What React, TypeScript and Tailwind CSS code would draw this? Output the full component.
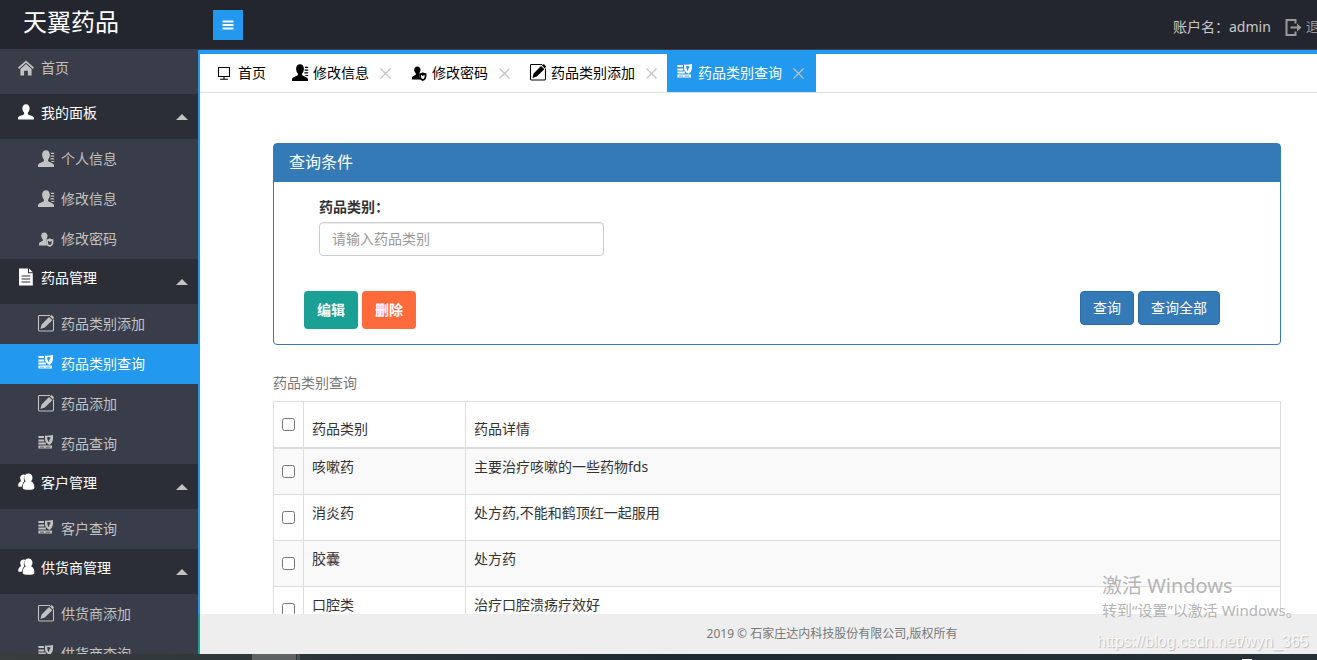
import clsx from "clsx";
import { useState } from "react";
import type { ReactNode } from "react";

type IconName = "home" | "user" | "profile" | "password" | "file" | "edit" | "query" | "users" | "monitor";

const ICONS: Record<IconName, ReactNode> = {
  home: (
    <>
      <path d="M8 0.4 16 7.6 14.9 8.9 8 2.8 1.1 8.9 0 7.6Z" />
      <path d="M8 4.1 13.6 9.1V15.6H9.9V10.8H6.1V15.6H2.4V9.1Z" />
    </>
  ),
  user: (
    <path d="M8 0.2C10.3 0.2 11.6 1.9 11.6 4.2 11.6 6 10.9 7.6 9.9 8.6V10.2C10.4 11 15.6 12 16 13.3V15.6H0V13.3C0.4 12 5.6 11 6.1 10.2V8.6C5.1 7.6 4.4 6 4.4 4.2 4.4 1.9 5.7 0.2 8 0.2Z" />
  ),
  profile: (
    <>
      <path d="M8 -0.8C10.4 -0.8 11.9 1 11.9 3.8 11.9 5.8 11.1 7.6 10.1 8.6V10C10.7 11 16 12 16 14.2V16H0V14.2C0 12 5.3 11 5.9 10V8.6C4.9 7.6 4.1 5.8 4.1 3.8 4.1 1 5.6 -0.8 8 -0.8Z" />
      <path d="M13 1.8H16.2V2.9H13ZM12.6 4.6H16.2V5.7H12.6ZM12.4 7.3H16.2V8.4H12.4ZM13.4 10H16.2V11H13.4Z" />
    </>
  ),
  password: (
    <>
      <path d="M6.3 1.4C8.3 1.4 9.5 2.9 9.5 4.8 9.5 6.3 9 7.4 8.2 8.2 7.7 10 8.1 12.6 10 14.6H1V12.4C1.4 11 4.6 10.3 4.9 9.6V8.4C3.8 7.7 3.2 6.3 3.2 4.8 3.2 2.9 4.3 1.4 6.3 1.4Z" />
      <path
        fillRule="evenodd"
        d="M8.2 8.2C9.8 8.2 10.8 7.9 11.8 7.2 12.8 7.9 13.9 8.2 15.4 8.2V11.2C15.4 13.6 14 15.2 11.8 16 9.6 15.2 8.2 13.6 8.2 11.2ZM10 9.8V11.4C10 12.8 10.8 13.6 11.8 14.1 12.8 13.6 13.6 12.8 13.6 11.4V9.8L11.8 11Z"
      />
    </>
  ),
  file: (
    <path
      fillRule="evenodd"
      d="M1 -0.5H10V4.2H14.8V16.5H1ZM11 -0.5 14.8 3.3H11ZM3.6 6.6V7.6H12.2V6.6ZM3.6 9.6V10.6H12.2V9.6ZM3.6 12.6V13.6H12.2V12.6Z"
    />
  ),
  edit: (
    <g transform="translate(0 -1)">
      <path fill="none" stroke="currentColor" strokeWidth="1.1" d="M12 0.5H1.4Q0.5 0.5 0.5 1.4V15.1Q0.5 16 1.4 16H14.6Q15.5 16 15.5 15.1V4.6" />
      <path d="M11 1.9 14.3 5.2 6.8 12.6 2.4 13.9 3.6 9.6ZM11.8 1.3 13 0.4Q13.6 0 14.3 0.6L15.6 1.9Q16.1 2.6 15.6 3.2L14.9 4.4Z" />
    </g>
  ),
  query: (
    <g transform="translate(-1 -2)">
      <path d="M1.4 2H7V4H1.4ZM1.4 5.4H7.2V7.4H1.4ZM1.4 8.6H8.8V10.4H1.4Z" />
      <path fillRule="evenodd" d="M1.4 11.6H15V14.6H1.4ZM3 12.7V13.6H7V12.7ZM8.6 12.7V13.6H13.4V12.7Z" />
      <path fillRule="evenodd" d="M8 1.6Q11 1.9 16 1V5.6Q15.6 9 12.4 11 8.2 8.6 8 5.4ZM10.2 3.2 10.4 5.6Q10.8 7.4 12 8.2 11.8 6 13.8 3.8 12 2.8 10.2 3.2Z" />
    </g>
  ),
  users: (
    <>
      <path d="M5.6 0.6Q6.9 0.5 7.4 1.3 4.9 3.7 6.3 7.2 4 8.8 3.8 12.8H0.4Q-0.6 9.3 2.6 7.6 3.2 6.9 2.6 5.8C1.4 3.4 3 0.8 5.6 0.6Z" />
      <path d="M10.4 -0.4C12.9 -0.4 14.5 1.3 14.5 3.7 14.5 5.3 13.9 6.4 13 7.2 15.6 8.2 16.6 11.2 16.3 14.4Q15.7 15.8 10.6 15.8 5.4 15.8 4.8 14.4C4.5 11.2 5.2 8.4 7.8 7.2 6.9 6.4 6.3 5.3 6.3 3.7 6.3 1.3 7.9 -0.4 10.4 -0.4Z" />
    </>
  ),
  monitor: <path fill="none" stroke="currentColor" strokeWidth="1.1" d="M0.5 2.5H11.5V11.5H0.5ZM6 11.5V14M2 14.2H10" />,
};

function Icon({ name }: { name: IconName }) {
  return (
    <svg viewBox="0 0 16 17" className="h-[17px] w-4 shrink-0 overflow-visible" fill="currentColor" aria-hidden="true">
      {ICONS[name]}
    </svg>
  );
}

const MENU: { title: string; icon: IconName; items: { title: string; icon: IconName }[] }[] = [
  {
    title: "我的面板",
    icon: "user",
    items: [
      { title: "个人信息", icon: "profile" },
      { title: "修改信息", icon: "profile" },
      { title: "修改密码", icon: "password" },
    ],
  },
  {
    title: "药品管理",
    icon: "file",
    items: [
      { title: "药品类别添加", icon: "edit" },
      { title: "药品类别查询", icon: "query" },
      { title: "药品添加", icon: "edit" },
      { title: "药品查询", icon: "query" },
    ],
  },
  { title: "客户管理", icon: "users", items: [{ title: "客户查询", icon: "query" }] },
  {
    title: "供货商管理",
    icon: "users",
    items: [
      { title: "供货商添加", icon: "edit" },
      { title: "供货商查询", icon: "query" },
    ],
  },
];

const TABS: { title: string; icon: IconName }[] = [
  { title: "修改信息", icon: "profile" },
  { title: "修改密码", icon: "password" },
  { title: "药品类别添加", icon: "edit" },
  { title: "药品类别查询", icon: "query" },
];

const ROWS = [
  { name: "咳嗽药", detail: "主要治疗咳嗽的一些药物fds" },
  { name: "消炎药", detail: "处方药,不能和鹤顶红一起服用" },
  { name: "胶囊", detail: "处方药" },
  { name: "口腔类", detail: "治疗口腔溃疡疗效好" },
];

function Header() {
  return (
    <header className="flex h-[50px] shrink-0 items-start overflow-hidden border-b border-[#393d49] bg-[#23262e]">
      <h1 className="w-[213px] shrink-0 pt-1 pl-[23px] text-2xl leading-9 text-white">天翼药品</h1>
      <button type="button" aria-label="菜单" className="mt-2.5 flex size-[30px] items-center justify-center bg-[#2299ee] text-white">
        <svg viewBox="0 0 12 10" className="h-2.5 w-3" fill="currentColor" aria-hidden="true">
          <path d="M0.5 0.5H11.5V2.5H0.5ZM0.5 4H11.5V6H0.5ZM0.5 7.5H11.5V9.5H0.5Z" />
        </svg>
      </button>
      <div className="ml-auto flex h-[54px] w-36 shrink-0 items-center overflow-hidden whitespace-nowrap text-[#c8c8c8]">
        <span>账户名：admin</span>
        <a href="#logout" className="ml-3.5 flex items-center gap-1 text-[#9a9a9a]">
          <svg viewBox="0 0 17 17" className="size-[17px] shrink-0" fill="none" stroke="currentColor" strokeWidth="2" aria-hidden="true">
            <path d="M10.5 4.5V1H1.5V16H10.5V12.5M5.5 8.5H13" />
            <path d="M12 4.5 16.5 8.5 12 12.5Z" fill="currentColor" stroke="none" />
          </svg>
          退出
        </a>
      </div>
    </header>
  );
}

function Sidebar() {
  return (
    <nav className="w-[198px] shrink-0 overflow-hidden bg-[#393d49] text-[#c2c2c2]">
      <a href="#home" className="flex h-11 items-center gap-[7px] pb-2 pl-[18px]">
        <Icon name="home" />
        首页
      </a>
      {MENU.map((group) => (
        <div key={group.title}>
          <button type="button" className="flex h-[45px] w-full items-center gap-[7px] bg-[#2b2e37] pr-2.5 pb-2 pl-[18px] text-white">
            <Icon name={group.icon} />
            {group.title}
            <svg viewBox="0 0 12 6" className="mt-2 ml-auto h-1.5 w-3 text-[#c2c2c2]" fill="currentColor" aria-hidden="true">
              <path d="M6 0 12 6H0Z" />
            </svg>
          </button>
          {group.items.map((item) => (
            <a
              key={item.title}
              href="#menu"
              className={clsx("flex h-10 items-center gap-[7px] pl-[38px]", item.title === "药品类别查询" && "bg-[#2299ee] text-white")}
            >
              <Icon name={item.icon} />
              {item.title}
            </a>
          ))}
        </div>
      ))}
    </nav>
  );
}

function TabBar() {
  return (
    <div className="flex h-[39px] shrink-0 overflow-hidden border-b border-[#e2e2e2] pl-2 whitespace-nowrap text-black">
      <button type="button" className="flex w-[74px] items-center gap-1 pl-2.5">
        <Icon name="monitor" />
        首页
      </button>
      {TABS.map((tab) => (
        <div key={tab.title} className={clsx("flex items-center pl-2.5", tab.title === "药品类别查询" ? "bg-[#2299ee] pr-3 text-white" : "pr-2.5")}>
          <button type="button" className="flex items-center gap-[5px]">
            <Icon name={tab.icon} />
            {tab.title}
          </button>
          <button type="button" aria-label={"关闭" + tab.title} className="ml-[11px] text-[#c2c2c2]">
            <svg viewBox="0 0 11 11" className="size-[11px]" fill="none" stroke="currentColor" strokeWidth="1.2" aria-hidden="true">
              <path d="M0.5 0.5 10.5 10.5M10.5 0.5 0.5 10.5" />
            </svg>
          </button>
        </div>
      ))}
    </div>
  );
}

function SearchPanel() {
  const [keyword, setKeyword] = useState("");

  return (
    <section className="rounded border border-[#337ab7]">
      <h2 className="bg-[#337ab7] px-[15px] pt-2 pb-2.5 text-base leading-5 text-white">查询条件</h2>
      <form className="pt-[15px] pr-[60px] pb-[15px] pl-[30px]" onSubmit={(e) => e.preventDefault()}>
        <div className="px-[15px]">
          <label htmlFor="category" className="mb-[5px] block leading-5 font-bold">
            药品类别：
          </label>
          <input
            id="category"
            type="text"
            value={keyword}
            onChange={(e) => setKeyword(e.target.value)}
            placeholder="请输入药品类别"
            className="block h-[34px] w-[285px] max-w-full rounded border border-[#ccc] px-3 pb-0.5 shadow-[inset_0_1px_1px_rgba(0,0,0,0.075)] placeholder:text-[#999]"
          />
        </div>
        <div className="mt-[35px] flex items-start gap-1">
          <button type="button" className="h-[38px] rounded bg-[#1aa094] px-[13px] font-bold text-white">编辑</button>
          <button type="button" className="h-[38px] rounded bg-[#ff6a3a] px-[13px] font-bold text-white">删除</button>
          <button type="submit" className="ml-auto h-[34px] rounded border border-[#2e6da4] bg-[#337ab7] px-3 text-white">查询</button>
          <button type="button" className="h-[34px] rounded border border-[#2e6da4] bg-[#337ab7] px-3 text-white">查询全部</button>
        </div>
      </form>
    </section>
  );
}

function CategoryTable() {
  return (
    <table className="mt-5 w-full table-fixed border-collapse border border-[#ddd] text-left">
      <caption className="py-2 text-left leading-5 text-[#777]">药品类别查询</caption>
      <colgroup>
        <col className="w-[30px]" />
        <col className="w-[162px]" />
        <col />
      </colgroup>
      <thead>
        <tr className="h-[46px] border-b-2 border-[#ddd]">
          <th className="border-r border-[#ddd] text-center align-middle">
            <input type="checkbox" aria-label="全选" className="mx-auto block size-[13px]" />
          </th>
          <th className="border-r border-[#ddd] p-2 align-bottom font-normal">药品类别</th>
          <th className="p-2 align-bottom font-normal">药品详情</th>
        </tr>
      </thead>
      <tbody>
        {ROWS.map((row) => (
          <tr key={row.name} className="h-[46px] border-b border-[#ddd] first:h-[47px] odd:bg-[#f9f9f9]">
            <td className="border-r border-[#ddd]">
              <input type="checkbox" aria-label={row.name} className="mx-auto block size-[13px]" />
            </td>
            <td className="border-r border-[#ddd] p-2 align-top">{row.name}</td>
            <td className="p-2 align-top">{row.detail}</td>
          </tr>
        ))}
      </tbody>
    </table>
  );
}

function Taskbar() {
  return (
    <div className="flex h-1.5 shrink-0 items-end bg-linear-to-r from-[#393d3d] via-[#1c2b32] to-[#243036]">
      <div className="ml-[252px] h-full w-11 bg-[#5e6262]" />
      <div className="ml-px h-full w-[3px] bg-[#4c5050]" />
      <div className="mr-[65px] ml-auto h-px w-2.5 bg-white" />
    </div>
  );
}

export default function App() {
  return (
    <div className="relative flex h-screen flex-col overflow-hidden bg-white font-['Noto_Sans','Noto_Sans_CJK_SC',sans-serif] text-sm leading-5 text-[#333]">
      <Header />
      <div className="flex min-h-0 flex-1">
        <Sidebar />
        <div className="flex min-w-0 flex-1 flex-col">
          <main className="flex min-h-0 flex-1 flex-col border-t-4 border-l-2 border-[#2299ee]">
            <TabBar />
            <div className="min-h-0 flex-1 overflow-hidden pt-[50px] pr-9 pl-[73px]">
              <SearchPanel />
              <CategoryTable />
            </div>
          </main>
          <footer className="flex h-10 shrink-0 items-center justify-center border-l-2 border-[#1aa094] bg-[#eee] pl-[147px] text-xs text-[#777]">
            2019 © 石家庄达内科技股份有限公司,版权所有
          </footer>
        </div>
      </div>
      <Taskbar />

      {/* Watermarks over the page */}
      <div className="pointer-events-none absolute right-[9px] bottom-2 w-[211px] whitespace-nowrap text-[#b4b4b4]">
        <p className="pl-[5px] text-xl leading-7">激活 Windows</p>
        <p className="pl-[5px] text-[15px] leading-5">转到“设置”以激活 Windows。</p>
        <p className="mt-3 font-['Liberation_Sans',sans-serif] text-base leading-5 text-[#f8f8f8] [text-shadow:1px_1px_1px_#bbb]">
          https://blog.csdn.net/wyn_365
        </p>
      </div>
    </div>
  );
}
